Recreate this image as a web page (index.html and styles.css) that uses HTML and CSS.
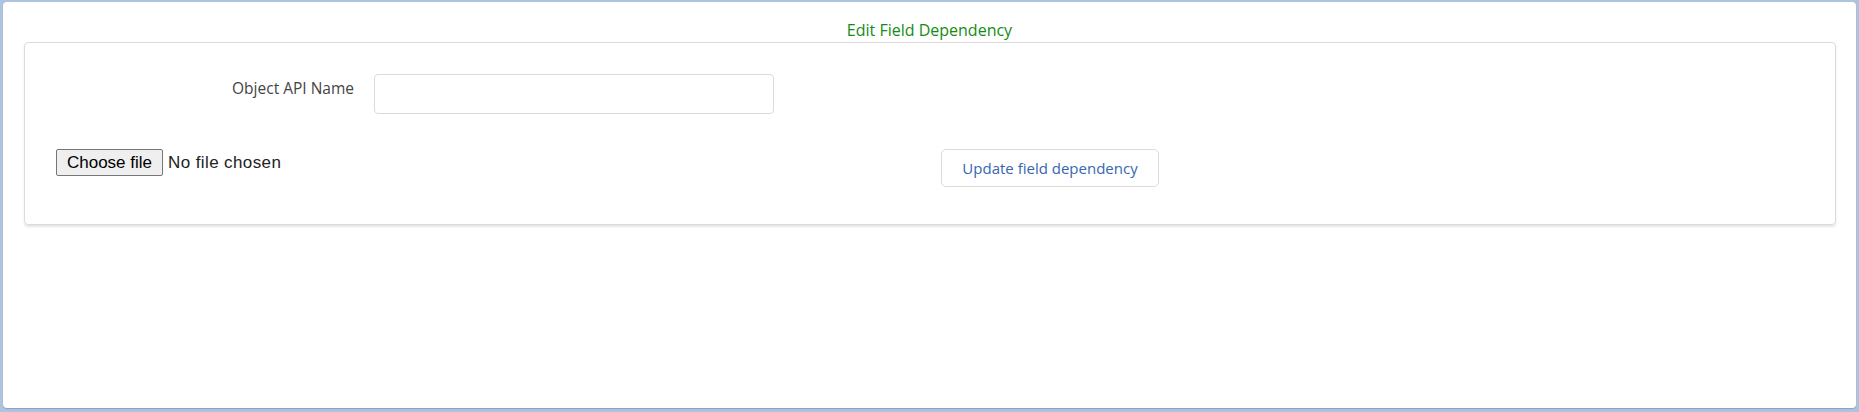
FILE: index.html
```html
<!DOCTYPE html>
<html lang="en">
<head>
<meta charset="utf-8">
<title>Edit Field Dependency</title>
<link rel="stylesheet" href="styles.css">
</head>
<body>
<div class="window">
  <div class="title">Edit Field Dependency</div>
  <div class="card">
    <div class="form-row">
      <label class="field-label" for="objApi">Object API Name</label>
      <input class="field-input" id="objApi" type="text">
    </div>
    <div class="action-row">
      <label class="file-picker">
        <input class="file-hidden" type="file">
        <span class="file-btn">Choose file</span>
        <span class="file-status">No file chosen</span>
      </label>
      <div class="button-col">
        <button class="neutral-btn" type="button">Update field dependency</button>
      </div>
    </div>
  </div>
</div>
</body>
</html>
```

FILE: styles.css
```css
html, body {
  margin: 0;
  padding: 0;
}
body {
  background: #adc3e0;
  height: 412px;
  overflow: hidden;
  padding: 2px 3px 0 3px;
  box-sizing: border-box;
}
.window {
  background: #ffffff;
  height: 406px;
  border-radius: 4px;
  box-shadow: 0 1px 1px rgba(0, 0, 0, 0.18);
  overflow: hidden;
  font-family: "Open Sans", "Noto Sans", sans-serif;
}
.title {
  padding: 18px 0 2px;
  line-height: 20px;
  font-size: 16px;
  color: #148c14;
  text-align: center;
}
.card {
  margin: 0 20px 0 21px;
  border: 1px solid #dddbda;
  border-radius: 4px;
  box-shadow: 0 2px 2px 0 rgba(0, 0, 0, 0.1);
  padding: 31px 0 37px 0;
}
.form-row {
  display: flex;
  align-items: flex-start;
}
.field-label {
  text-align: right;
  padding-top: 4px;
  padding-right: 20px;
  box-sizing: border-box;
  width: 349px;
  line-height: 20px;
  font-size: 15.5px;
  color: #444444;
}
.field-input {
  width: 400px;
  height: 40px;
  box-sizing: border-box;
  border: 1px solid #dddbda;
  border-radius: 4px;
  margin: 0;
  padding: 0 12px;
  font: inherit;
}
.action-row {
  margin-top: 35px;
  display: grid;
  grid-template-columns: 885px auto;
  padding-left: 31px;
  align-items: start;
}
.file-picker {
  display: flex;
  align-items: center;
  font-family: "Liberation Sans", Arial, sans-serif;
  font-size: 17px;
  color: #222222;
  cursor: default;
}
.file-hidden {
  display: none;
}
.file-btn {
  box-sizing: border-box;
  width: 107px;
  height: 27px;
  line-height: 25px;
  text-align: center;
  border: 1px solid #767676;
  border-radius: 2px;
  background: #efefef;
  color: #000000;
  margin-right: 5px;
}
.file-status {
  letter-spacing: 0.4px;
}
.neutral-btn {
  height: 38px;
  padding: 0 20px;
  width: 218px;
  box-sizing: border-box;
  border: 1px solid #dddbda;
  border-radius: 5px;
  background: #ffffff;
  color: #3567b0;
  font-family: "Open Sans", "Noto Sans", sans-serif;
  font-size: 15px;
  margin: 0;
}
```
